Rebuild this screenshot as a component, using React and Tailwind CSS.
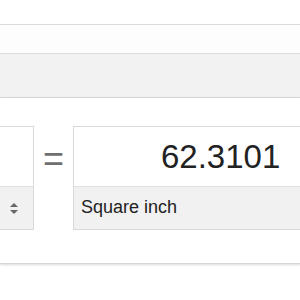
import React from "react";

export default function App() {
  return (
    <div className="w-[300px] h-[300px] overflow-hidden bg-white" style={{ fontFamily: '"Liberation Sans", Arial, sans-serif' }}>
      <div className="h-[24px]" />
      <div className="h-[30px] border-y border-[#dcdcdc] bg-[#fdfdfd]" />
      <div className="h-[43px] bg-[#f2f2f2]" />
      <div className="border-t border-b border-[#d6d6d6] bg-white pt-[28px] pb-[33px] shadow-[0_1px_2px_rgba(0,0,0,0.15)]">
        <div className="flex items-start -ml-[66px]">
          <div className="w-[100px] h-[104px] shrink-0 border border-[#d9d9d9] flex flex-col">
            <div className="h-[59px] bg-white" />
            <div className="flex-1 border-t border-[#e0e0e0] bg-[#f1f1f1] flex items-center justify-end pr-[14px]">
              <svg width="10" height="13" viewBox="0 0 10 13">
                <path d="M1 5 L5 1 L9 5 Z" fill="#666" />
                <path d="M1 8 L5 12 L9 8 Z" fill="#666" />
              </svg>
            </div>
          </div>
          <div className="w-[39px] shrink-0 flex justify-center pt-[13px]">
            <span className="text-[36px] leading-[40px] text-[#6f6f6f]">=</span>
          </div>
          <div className="w-[300px] h-[104px] shrink-0 border border-[#d9d9d9] flex flex-col">
            <div className="h-[59px] bg-white pl-[87px] pt-[10px]">
              <span className="text-[33px] leading-[40px] text-[#222]">62.3101</span>
            </div>
            <div className="flex-1 border-t border-[#e0e0e0] bg-[#f1f1f1] pl-[7px] pt-[8px]">
              <span className="text-[18px] leading-[24px] text-[#222]">Square inch</span>
            </div>
          </div>
        </div>
      </div>
    </div>
  );
}
